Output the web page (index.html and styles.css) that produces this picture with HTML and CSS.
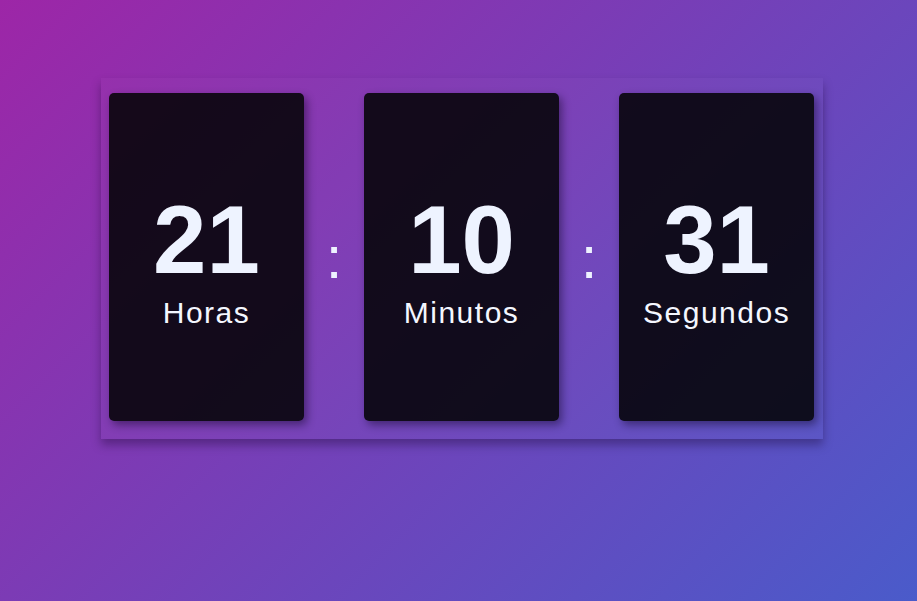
FILE: index.html
```html
<!DOCTYPE html>
<html lang="es">
<head>
<meta charset="utf-8">
<title>Reloj</title>
<link rel="stylesheet" href="styles.css">
</head>
<body>
<main class="page">
  <section class="clock">
    <div class="card">
      <span class="num">21</span>
      <span class="label">Horas</span>
    </div>
    <span class="colon">:</span>
    <div class="card">
      <span class="num">10</span>
      <span class="label">Minutos</span>
    </div>
    <span class="colon">:</span>
    <div class="card">
      <span class="num">31</span>
      <span class="label">Segundos</span>
    </div>
  </section>
</main>
</body>
</html>
```

FILE: styles.css
```css
html, body {
  margin: 0;
  height: 100%;
}
body {
  background: linear-gradient(135deg, #9d26a7 0%, #4a5bca 100%);
  font-family: "Liberation Sans", Arial, sans-serif;
  overflow: hidden;
}
.page {
  padding: 78px 0 0 101px;
}
.clock {
  display: flex;
  align-items: center;
  gap: 21.7px;
  width: max-content;
  padding: 15px 9px 18px 8px;
  background: rgba(255, 255, 255, 0.025);
  box-shadow: 0 6px 9px rgba(20, 0, 40, 0.35);
}
.card {
  width: 195px;
  height: 328px;
  border-radius: 5px;
  background: rgba(3, 3, 6, 0.88);
  box-shadow: 3px 4px 9px rgba(10, 0, 30, 0.45);
  display: flex;
  flex-direction: column;
  align-items: center;
  justify-content: center;
}
.num {
  font-size: 96px;
  line-height: 112px;
  font-weight: 700;
  color: #eef3ff;
}
.label {
  font-size: 30px;
  letter-spacing: 1.5px;
  color: #f4f7ff;
}
.colon {
  font-size: 60px;
  color: #eef2ff;
}
```
